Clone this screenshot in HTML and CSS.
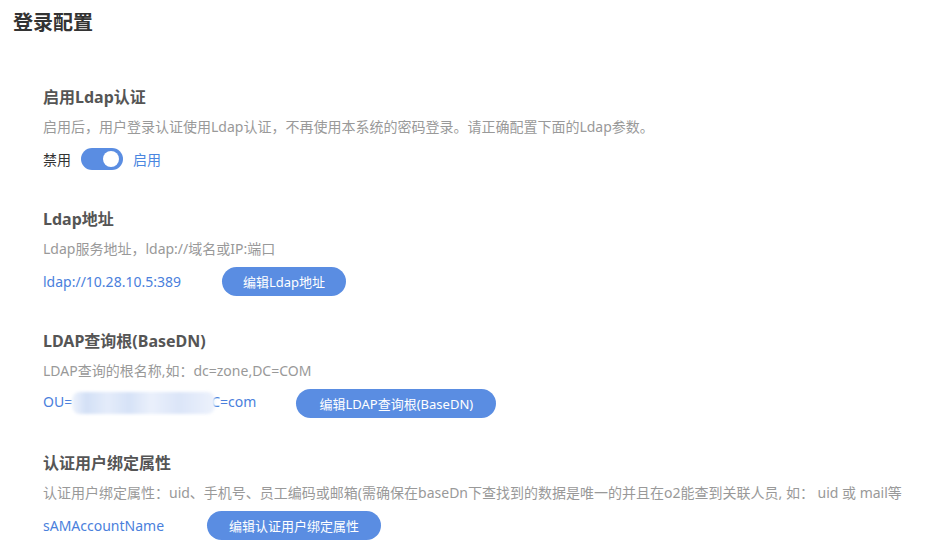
FILE: index.html
```html
<!DOCTYPE html>
<html lang="zh-CN">
<head>
    <meta charset="UTF-8">
    <meta name="viewport" content="width=device-width, initial-scale=1.0">
    <title>登录配置</title>
    <link rel="stylesheet" href="styles.css">
</head>
<body>
    <div class="page">
        <h1 class="page-title">登录配置</h1>
        <div class="section">
            <div class="section-title">启用Ldap认证</div>
            <div class="section-desc">启用后，用户登录认证使用Ldap认证，不再使用本系统的密码登录。请正确配置下面的Ldap参数。</div>
            <div class="row">
                <span class="label-off">禁用</span>
                <span class="switch"><span class="knob"></span></span>
                <span class="label-on">启用</span>
            </div>
        </div>
        <div class="section">
            <div class="section-title">Ldap地址</div>
            <div class="section-desc">Ldap服务地址，ldap://域名或IP:端口</div>
            <div class="row">
                <span class="value">ldap://10.28.10.5:389</span>
                <button class="btn btn-addr">编辑Ldap地址</button>
            </div>
        </div>
        <div class="section">
            <div class="section-title">LDAP查询根(BaseDN)</div>
            <div class="section-desc">LDAP查询的根名称,如：dc=zone,DC=COM</div>
            <div class="row">
                <span class="value">OU=<span class="mask"></span>C=com</span>
                <button class="btn btn-base">编辑LDAP查询根(BaseDN)</button>
            </div>
        </div>
        <div class="section">
            <div class="section-title">认证用户绑定属性</div>
            <div class="section-desc">认证用户绑定属性：uid、手机号、员工编码或邮箱(需确保在baseDn下查找到的数据是唯一的并且在o2能查到关联人员, 如： uid 或 mail等</div>
            <div class="row">
                <span class="value">sAMAccountName</span>
                <button class="btn btn-attr">编辑认证用户绑定属性</button>
            </div>
        </div>
    </div>
</body>
</html>
```

FILE: styles.css
```css
body {
    margin: 0;
    background: #fff;
    font-family: "Noto Sans", "Noto Sans CJK SC", sans-serif;
    color: #333;
    overflow: hidden;
}
.page {
    padding: 9px 0 0 13px;
}
.page-title {
    margin: 0 0 48px 0;
    font-size: 20px;
    font-weight: bold;
    line-height: 28px;
    color: #333;
}
.section {
    padding-left: 30px;
    height: 122px;
}
.section-title {
    font-size: 16px;
    font-weight: bold;
    color: #555;
    line-height: 24px;
}
.section-desc {
    margin-top: 8px;
    font-size: 14px;
    color: #999;
    line-height: 20px;
    white-space: nowrap;
}
.row {
    display: flex;
    align-items: center;
    margin-top: 7px;
    height: 30px;
    font-size: 14px;
}
.label-off {
    color: #333;
    font-size: 14px;
}
.switch {
    position: relative;
    display: inline-block;
    width: 42px;
    height: 22px;
    margin: 0 10px;
    border-radius: 11px;
    background: #5a8de2;
}
.knob {
    position: absolute;
    top: 3px;
    right: 4px;
    width: 16px;
    height: 16px;
    border-radius: 50%;
    background: #fff;
}
.label-on {
    color: #4a86e0;
    font-size: 14px;
}
.value {
    color: #4a80dc;
    font-size: 14px;
}
.mask {
    display: inline-block;
    vertical-align: middle;
    width: 143px;
    height: 22px;
    margin-right: -4px;
    border-radius: 8px;
    background: linear-gradient(90deg, #eef3fc 0%, #d3e0f6 10%, #e4ecfa 25%, #d6e2f7 40%, #eaf0fb 55%, #dbe5f8 75%, #edf2fc 100%);
    filter: blur(1.5px);
    position: relative;
}
.btn {
    height: 29px;
    padding: 0 18px;
    border: none;
    border-radius: 15px;
    background: #5a8de2;
    color: #fff;
    font-family: "Noto Sans", "Noto Sans CJK SC", sans-serif;
    font-size: 13px;
}
.btn-addr {
    margin-left: 41px;
    width: 124px;
}
.btn-base {
    margin-left: 40px;
    width: 200px;
}
.btn-attr {
    margin-left: 43px;
    width: 174px;
}
```
